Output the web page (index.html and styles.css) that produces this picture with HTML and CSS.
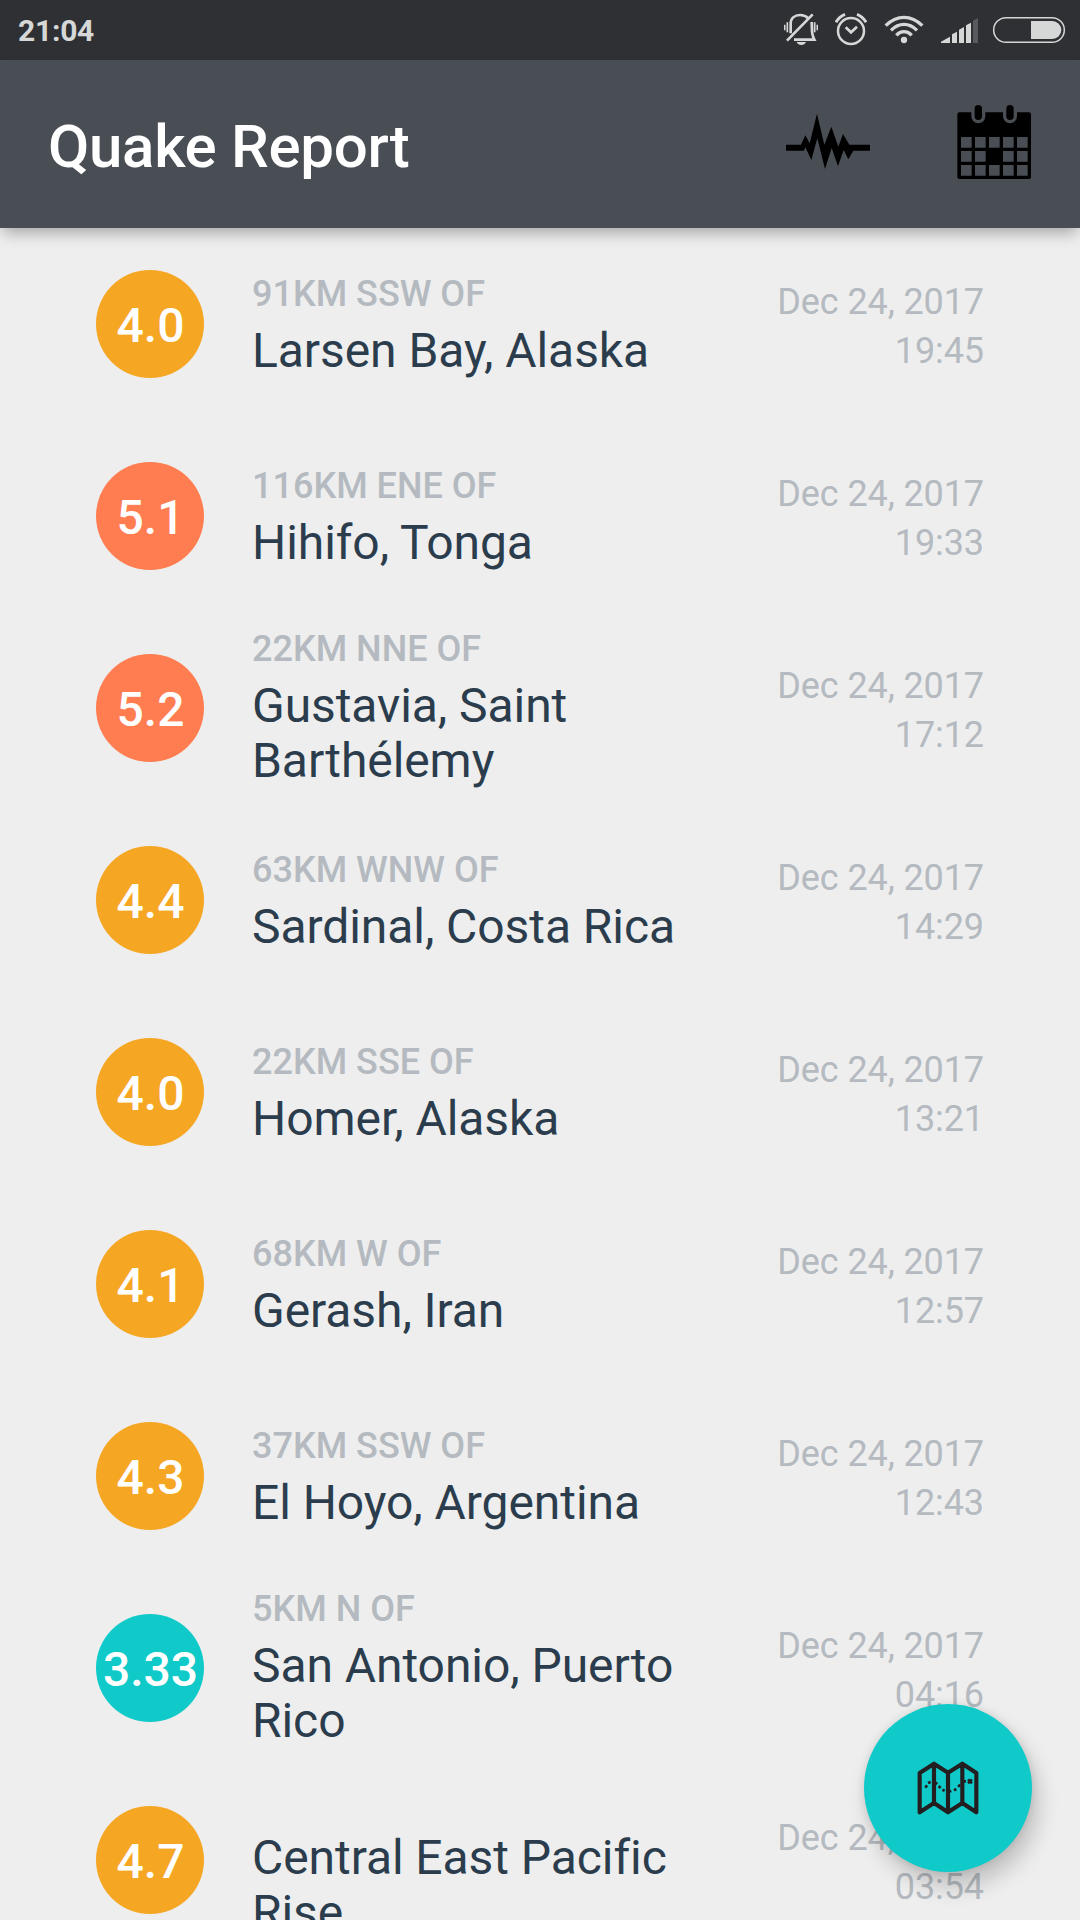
FILE: index.html
```html
<!DOCTYPE html>
<html lang="en">
<head>
<meta charset="utf-8">
<title>Quake Report</title>
<link rel="stylesheet" href="styles.css">
</head>
<body>
<div class="screen">
  <div class="status-bar">
    <span class="clock">21:04</span>
    <div class="status-icons">
      <svg class="bell" viewBox="72 0 102 180" fill="none" stroke="#d6d8d7">
        <path d="M74 74v17M82 67v30M164 67v30M172 74v17" stroke-width="5"/>
        <path d="M92 100V72C92 54 105 45 120 45C131 45 139 49 145 55M155 66C156 78 155 90 157 101C158 109 160 113 163 119H102M81 122L158 43" stroke-width="8"/>
        <path d="M110 126H138Q134 135 124 135T110 126Z" fill="#d6d8d7" stroke="none"/>
      </svg>
      <svg class="alarm" viewBox="225 0 96 180" fill="none" stroke="#d6d8d7">
        <circle cx="273" cy="93" r="39" stroke-width="7.500"/>
        <path d="M257 82L273 97L291 80" stroke-width="8"/>
        <path d="M228 67Q237 50 255 43M318 67Q309 50 291 43" stroke-width="9"/>
      </svg>
      <svg class="wifi" viewBox="372 0 120 180" fill="none" stroke="#d6d8d7" stroke-width="10">
        <path d="M377 77Q402 52 432 52T487 77M393 91Q411 73 432 73T471 91M409 106Q419 95 432 95T455 106"/>
        <circle cx="432" cy="120" r="9.500" fill="#d6d8d7" stroke="none"/>
      </svg>
      <svg class="signal" viewBox="540 0 117 180" fill="#d6d8d7">
        <path d="M543 129V125L570 110V129ZM576 129V103L591 95V129ZM597 129V89L612 81V129ZM618 129V76L633 68V129Z"/>
        <path d="M639 129V62L654 54V129Z" fill="#56595d"/>
      </svg>
      <svg class="battery" viewBox="696 0 222 180">
        <rect x="701" y="53" width="212" height="74" rx="37" fill="none" stroke="#d6d8d7" stroke-width="4.500"/>
        <path d="M813 63H877A27 27 0 0 1 877 117H813Z" fill="#d6d8d7"/>
      </svg>
    </div>
  </div>

  <header class="app-bar">
    <h1 class="title">Quake Report</h1>
    <svg class="pulse" viewBox="78 -60 252 504">
      <path d="M78 194H123L136 166L149 190L171 101L193 194L214 140L235 200L249 162L268 194H330V212H280L265 238L251 210L234 259L215 204L195 267L172 175L154 240L136 202L132 212H78Z"/>
    </svg>
    <svg class="calendar" viewBox="591 -60 222 504">
      <path fill-rule="evenodd" d="M598 97H634V109A21 21 0 0 0 676 109V97H729V109A21 21 0 0 0 771 109V97H807Q813 97 813 103V291Q813 297 807 297H598Q592 297 592 291V103Q592 97 598 97Z
      M603 171V203H635V171ZM645 171V203H677V171ZM687 171V203H719V171ZM729 171V203H761V171ZM771 171V203H803V171Z
      M603 213V245H635V213ZM645 213V245H677V213ZM729 213V245H761V213ZM771 213V245H803V213Z
      M603 255V287H635V255ZM645 255V287H677V255ZM687 255V287H719V255ZM729 255V287H761V255ZM771 255V287H803V255Z"/>
      <rect x="644" y="75" width="22" height="45" rx="11"/>
      <rect x="739" y="75" width="22" height="45" rx="11"/>
    </svg>
  </header>

  <main class="list">
    <div class="quake"><div class="mag m4">4.0</div><div class="where"><div class="offset">91KM SSW OF</div><div class="place">Larsen Bay, Alaska</div></div><div class="when"><div>Dec 24, 2017</div><div>19:45</div></div></div>
    <div class="quake"><div class="mag m5">5.1</div><div class="where"><div class="offset">116KM ENE OF</div><div class="place">Hihifo, Tonga</div></div><div class="when"><div>Dec 24, 2017</div><div>19:33</div></div></div>
    <div class="quake"><div class="mag m5">5.2</div><div class="where two-line"><div class="offset">22KM NNE OF</div><div class="place">Gustavia, Saint Barthélemy</div></div><div class="when"><div>Dec 24, 2017</div><div>17:12</div></div></div>
    <div class="quake"><div class="mag m4">4.4</div><div class="where"><div class="offset">63KM WNW OF</div><div class="place">Sardinal, Costa Rica</div></div><div class="when"><div>Dec 24, 2017</div><div>14:29</div></div></div>
    <div class="quake"><div class="mag m4">4.0</div><div class="where"><div class="offset">22KM SSE OF</div><div class="place">Homer, Alaska</div></div><div class="when"><div>Dec 24, 2017</div><div>13:21</div></div></div>
    <div class="quake"><div class="mag m4">4.1</div><div class="where"><div class="offset">68KM W OF</div><div class="place">Gerash, Iran</div></div><div class="when"><div>Dec 24, 2017</div><div>12:57</div></div></div>
    <div class="quake"><div class="mag m4">4.3</div><div class="where"><div class="offset">37KM SSW OF</div><div class="place">El Hoyo, Argentina</div></div><div class="when"><div>Dec 24, 2017</div><div>12:43</div></div></div>
    <div class="quake"><div class="mag m3">3.33</div><div class="where two-line"><div class="offset">5KM N OF</div><div class="place">San Antonio, Puerto Rico</div></div><div class="when"><div>Dec 24, 2017</div><div>04:16</div></div></div>
    <div class="quake"><div class="mag m4">4.7</div><div class="where two-line"><div class="offset"></div><div class="place">Central East Pacific Rise</div></div><div class="when"><div>Dec 24, 2017</div><div>03:54</div></div></div>
  </main>

  <div class="fab">
    <svg class="map" viewBox="231 243 186 162" fill="none" stroke="#231f20">
      <path d="M239 279L282 251L324 278L367 251L409 279V397L367 369L324 397L282 369L239 397ZM282 251V369M324 278V397M367 251V369" stroke-width="12.500" stroke-linejoin="round"/>
      <path d="M256 323L261 316M264 309L272 306M286 308L292 312M296 318L302 324M307 329L314 332M326 335L334 333M342 331L349 327M354 320L361 314M370 305L378 303" stroke-width="8"/>
      <path d="M384 298L396 310M396 298L384 310" stroke-width="7.500"/>
    </svg>
  </div>
</div>
</body>
</html>
```
FILE: styles.css
```css
* {
  box-sizing: border-box;
}

body {
  margin: 0;
  font-family: Roboto, "Liberation Sans", sans-serif;
}

svg {
  display: block;
  flex: none;
}

.screen {
  position: relative;
  display: flex;
  flex-direction: column;
  width: 1080px;
  height: 1920px;
  overflow: hidden;
  background: #eeeeee;
}

.status-bar {
  display: flex;
  flex: none;
  align-items: center;
  justify-content: space-between;
  height: 60px;
  padding: 0 14px 0 18px;
  background: #2f3034;
}

.clock {
  color: #d6d8d7;
  font-size: 30px;
  font-weight: 700;
  letter-spacing: -0.25px;
}

.status-icons {
  display: flex;
}

.status-icons svg {
  height: 60px;
}

.bell {
  width: 34px;
  margin-right: 17px;
}

.alarm {
  width: 32px;
  margin-right: 17px;
}

.wifi {
  width: 40px;
  margin-right: 16px;
}

.signal {
  width: 39px;
  margin-right: 13px;
}

.battery {
  width: 74px;
}

.app-bar {
  position: relative;
  display: flex;
  flex: none;
  align-items: center;
  height: 168px;
  padding: 0 49px 0 48px;
  background: #494d54;
  box-shadow: 0 8px 14px -3px rgba(0, 0, 0, 0.3);
}

.title {
  flex: 1;
  margin: 0;
  padding-top: 5px;
  color: #ffffff;
  font-size: 60px;
  font-weight: 500;
  line-height: 70px;
  letter-spacing: -0.3px;
}

.pulse {
  width: 84px;
  height: 168px;
  margin-right: 87px;
}

.calendar {
  width: 74px;
  height: 168px;
}

.list {
  flex: none;
}

.quake {
  display: flex;
  align-items: center;
  height: 192px;
  padding: 0 96px;
}

.mag {
  display: flex;
  flex: none;
  align-items: center;
  justify-content: center;
  width: 108px;
  height: 108px;
  margin-right: 48px;
  padding: 2px 0 0 1px;
  border-radius: 50%;
  color: #ffffff;
  font-size: 48px;
  font-weight: 500;
}

.m3 {
  background: #10cac9;
}

.m4 {
  background: #f5a623;
}

.m5 {
  background: #ff7d50;
}

.where {
  flex: none;
  width: 450px;
  padding-top: 3px;
}

.two-line {
  padding-top: 0;
}

.offset {
  height: 50px;
  color: #b4bac0;
  font-size: 36px;
  font-weight: 500;
  line-height: 42px;
}

.place {
  color: #2b3d4d;
  font-size: 48px;
  line-height: 55px;
  letter-spacing: -0.07px;
}

.when {
  flex: 1;
  padding-top: 6px;
  color: #b4bac0;
  font-size: 36px;
  line-height: 49px;
  letter-spacing: -0.1px;
  text-align: right;
}

.fab {
  position: absolute;
  right: 48px;
  bottom: 48px;
  display: flex;
  align-items: center;
  justify-content: center;
  width: 168px;
  height: 168px;
  border-radius: 50%;
  background: #10cac9;
  box-shadow: 6px 14px 22px rgba(0, 0, 0, 0.2), 0 0 8px rgba(0, 0, 0, 0.1);
}

.map {
  width: 62px;
  height: 54px;
}
```
